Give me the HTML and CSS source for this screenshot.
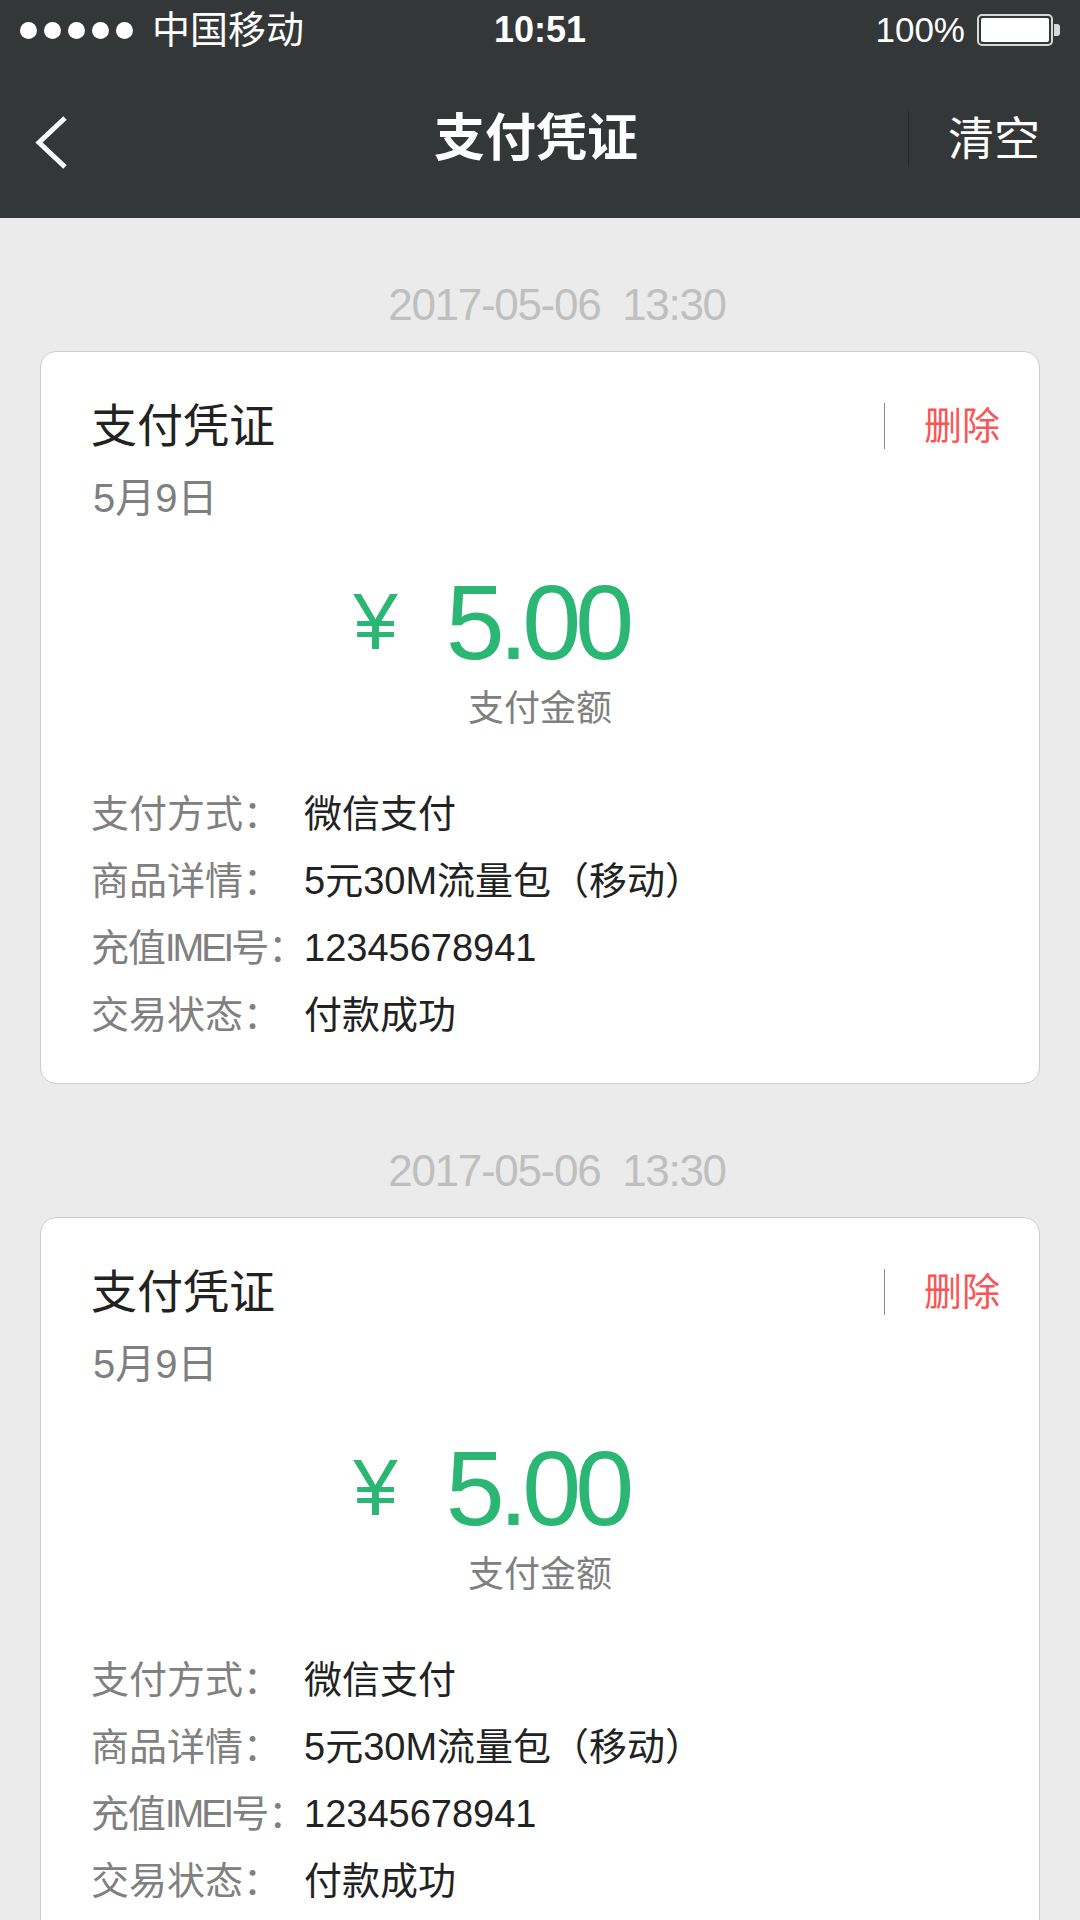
FILE: index.html
```html
<!DOCTYPE html>
<html lang="zh-CN">
<head>
<meta charset="utf-8">
<title>支付凭证</title>
<link rel="stylesheet" href="styles.css">
</head>
<body>
<header class="top">
  <div class="status">
    <div class="status-left">
      <span class="signal"><i></i><i></i><i></i><i></i><i></i></span>
      <span class="carrier">中国移动</span>
    </div>
    <div class="status-time">10:51</div>
    <div class="status-right">
      <span class="pct">100%</span>
      <span class="battery"><span class="battery-fill"></span></span>
      <span class="battery-nub"></span>
    </div>
  </div>
  <nav class="navbar">
    <div class="nav-left">
      <svg class="back" width="40" height="60" viewBox="0 0 40 60"><polyline points="33,9 7,33.5 33,58" fill="none" stroke="#fff" stroke-width="5"/></svg>
    </div>
    <div class="nav-title">支付凭证</div>
    <div class="nav-right">
      <span class="nav-sep"></span>
      <span class="nav-action">清空</span>
    </div>
  </nav>
</header>

<main class="list">
  <section class="group">
    <div class="stamp">2017-05-06&nbsp;&nbsp;13:30</div>
    <article class="card">
      <div class="card-head">
        <div class="card-title">支付凭证</div>
        <div class="card-ops"><span class="op-sep"></span><span class="op-del">删除</span></div>
      </div>
      <div class="card-date">5月9日</div>
      <div class="amount">
        <span class="yen">¥</span>
        <span class="num">5.00</span>
        <span class="pad"></span>
      </div>
      <div class="amount-label">支付金额</div>
      <dl class="info">
        <dt>支付方式：</dt><dd>微信支付</dd>
        <dt>商品详情：</dt><dd>5元30M流量包（移动）</dd>
        <dt class="tight">充值<span class="imei">IMEI</span>号：</dt><dd>12345678941</dd>
        <dt>交易状态：</dt><dd>付款成功</dd>
      </dl>
    </article>
  </section>

  <section class="group">
    <div class="stamp">2017-05-06&nbsp;&nbsp;13:30</div>
    <article class="card">
      <div class="card-head">
        <div class="card-title">支付凭证</div>
        <div class="card-ops"><span class="op-sep"></span><span class="op-del">删除</span></div>
      </div>
      <div class="card-date">5月9日</div>
      <div class="amount">
        <span class="yen">¥</span>
        <span class="num">5.00</span>
        <span class="pad"></span>
      </div>
      <div class="amount-label">支付金额</div>
      <dl class="info">
        <dt>支付方式：</dt><dd>微信支付</dd>
        <dt>商品详情：</dt><dd>5元30M流量包（移动）</dd>
        <dt class="tight">充值<span class="imei">IMEI</span>号：</dt><dd>12345678941</dd>
        <dt>交易状态：</dt><dd>付款成功</dd>
      </dl>
    </article>
  </section>
</main>
</body>
</html>
```

FILE: styles.css
```css
* { box-sizing: border-box; }
html, body { margin: 0; padding: 0; }
body {
  width: 1080px;
  background: #ebebeb;
  font-family: "Liberation Sans", "Noto Sans CJK SC", sans-serif;
  color: #222;
}

/* header */
.top { background: #343737; color: #fff; }
.status {
  height: 60px;
  display: grid;
  grid-template-columns: 1fr auto 1fr;
  align-items: center;
  padding: 0 20px;
}
.status-left { display: flex; align-items: center; }
.signal { display: flex; gap: 7px; }
.signal i { width: 17px; height: 17px; border-radius: 50%; background: #fff; display: block; }
.carrier { font-size: 38px; line-height: 60px; margin-left: 19px; }
.status-time { font-size: 36px; font-weight: bold; line-height: 60px; }
.status-right { display: flex; align-items: center; justify-content: flex-end; }
.pct { font-size: 35px; line-height: 60px; margin-right: 12px; }
.battery {
  width: 76px; height: 32px;
  border: 2px solid #d8d8d8;
  border-radius: 5px;
  padding: 2px;
  display: flex;
}
.battery-fill { flex: 1; background: #fff; border-radius: 2px; }
.battery-nub { width: 6px; height: 12px; background: #d8d8d8; border-radius: 0 3px 3px 0; margin-left: 1px; }

.navbar {
  height: 158px;
  display: grid;
  grid-template-columns: 1fr auto 1fr;
  align-items: center;
  padding: 0 40px 0 32px;
}
.nav-left { display: flex; align-items: center; }
.back { display: block; }
.nav-title { font-size: 51px; font-weight: bold; line-height: 60px; }
.nav-right { display: flex; align-items: center; justify-content: flex-end; }
.nav-sep { width: 1px; height: 56px; background: #262828; margin-right: 39px; }
.nav-action { font-size: 46px; line-height: 60px; }

/* list */
.list { padding: 0 40px 60px; }
.group { padding-top: 62px; }
.stamp {
  height: 50px;
  line-height: 50px;
  text-align: center;
  font-size: 44px;
  letter-spacing: -1.3px;
  color: #bfbfbf;
  margin-bottom: 21px;
  padding-left: 34px;
}
.card {
  background: #fff;
  border: 1px solid #cdcdcd;
  border-radius: 16px;
  padding: 44px 39px 34px 50px;
}
.card-head { display: flex; align-items: center; justify-content: space-between; height: 60px; }
.card-title { font-size: 46px; line-height: 60px; color: #222; }
.card-ops { display: flex; align-items: center; }
.op-sep { width: 1px; height: 46px; background: #8a8a8a; margin-right: 39px; }
.op-del { font-size: 38px; line-height: 60px; color: #f85656; }
.card-date { font-size: 40px; line-height: 44px; height: 44px; margin-top: 20px; margin-left: 2px; color: #7f7f7f; }

.amount {
  display: grid;
  grid-template-columns: 1fr auto 1fr;
  align-items: center;
  height: 110px;
  margin-top: 47px;
  margin-left: -11px;
  color: #2bb673;
}
.yen { justify-self: end; font-size: 80px; line-height: 110px; margin-right: 48px; }
.num { font-size: 106px; line-height: 110px; letter-spacing: -6px; padding-right: 6px; }
.amount-label {
  text-align: center;
  margin-left: -11px;
  font-size: 36px;
  line-height: 44px;
  height: 44px;
  margin-top: 10px;
  color: #808080;
}

.info {
  display: grid;
  grid-template-columns: 213px 1fr;
  margin: 50px 0 0;
}
.info dt, .info dd {
  margin: 0;
  height: 67px;
  line-height: 67px;
  font-size: 38px;
  white-space: nowrap;
}
.info dt { color: #808080; }
.info dt.tight { letter-spacing: -1px; }
.info dd { color: #222; }
.imei { letter-spacing: -3px; }
```
